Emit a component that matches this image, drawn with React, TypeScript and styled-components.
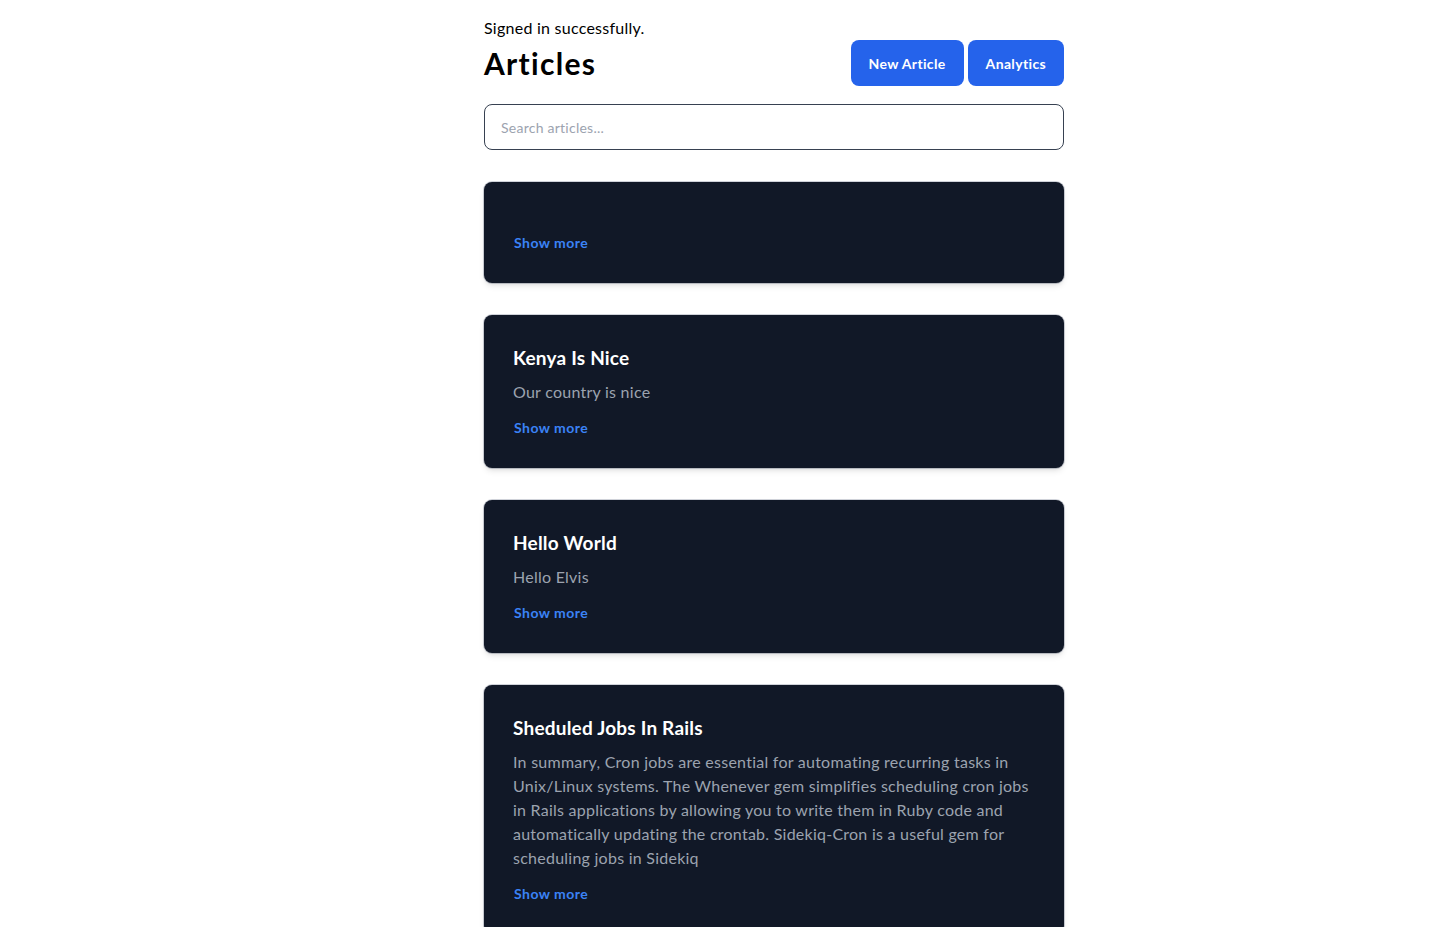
import { createGlobalStyle, styled } from 'styled-components'

const articles = [
  { id: 1, title: '', body: '' },
  { id: 2, title: 'Kenya Is Nice', body: 'Our country is nice' },
  { id: 3, title: 'Hello World', body: 'Hello Elvis' },
  {
    id: 4,
    title: 'Sheduled Jobs In Rails',
    body:
      'In summary, Cron jobs are essential for automating recurring tasks in Unix/Linux systems. The Whenever gem simplifies scheduling cron jobs in Rails applications by allowing you to write them in Ruby code and automatically updating the crontab. Sidekiq-Cron is a useful gem for scheduling jobs in Sidekiq',
  },
]

const App = () => {
  return (
    <>
      <GlobalStyle />
      <Page>
        <Main>
          <Notice>Signed in successfully.</Notice>
          <Header>
            <Title>Articles</Title>
            <BtnArea>
              <Btn>New Article</Btn>
              <Btn>Analytics</Btn>
            </BtnArea>
          </Header>
          <Search placeholder="Search articles..." />
          {articles.map((el) => (
            <Card key={el.id}>
              <CardTitle>{el.title}</CardTitle>
              <CardBody>{el.body}</CardBody>
              <ShowMore href="#">Show more</ShowMore>
            </Card>
          ))}
        </Main>
      </Page>
    </>
  )
}

const GlobalStyle = createGlobalStyle`
  body {
    margin: 0;
    background: #ffffff;
    font-family: Lato, "Noto Sans", sans-serif;
    color: #000000;
  }
  * {
    box-sizing: border-box;
  }
`
const Page = styled.div`
  display: flex;
  padding-left: 484px;
  padding-top: 16px;
`
const Main = styled.main`
  width: 580px;
  display: flex;
  flex-direction: column;
`
const Notice = styled.p`
  margin: 0;
  font-size: 16px;
  line-height: 24px;
  letter-spacing: 0.25px;
`
const Header = styled.div`
  display: flex;
  justify-content: space-between;
  align-items: center;
  margin-bottom: 18px;
`
const Title = styled.h1`
  margin: 0;
  font-size: 30px;
  line-height: 36px;
  font-weight: 700;
  letter-spacing: 1.3px;
`
const BtnArea = styled.div`
  display: flex;
  gap: 4px;
`
const Btn = styled.button`
  height: 46px;
  padding: 0 18px;
  border: none;
  border-radius: 8px;
  background-color: #2563eb;
  color: #ffffff;
  font-family: inherit;
  font-size: 14px;
  font-weight: 700;
  letter-spacing: 0.35px;
`
const Search = styled.input`
  height: 46px;
  width: 100%;
  padding: 0 16px;
  border: 1px solid #374151;
  border-radius: 8px;
  font-family: inherit;
  font-size: 14px;
  letter-spacing: 0.25px;
  margin-bottom: 32px;
  outline: none;
  &::placeholder {
    color: #9ca3af;
  }
`
const Card = styled.div`
  background-color: #111827;
  border-radius: 8px;
  padding: 29px 29px 30px;
  margin-bottom: 32px;
  box-shadow: 0 4px 6px -1px rgba(0, 0, 0, 0.1), 0 2px 4px -2px rgba(0, 0, 0, 0.1),
    0 0 0 1px rgba(120, 130, 150, 0.35);
  display: flex;
  flex-direction: column;
  align-items: flex-start;
`
const CardTitle = styled.h2`
  margin: 0;
  color: #ffffff;
  font-size: 19px;
  line-height: 28px;
  font-weight: 700;
  letter-spacing: 0.2px;
  &:empty {
    height: 0;
  }
`
const CardBody = styled.p`
  margin: 8px 0 0;
  color: #9ca3af;
  font-size: 16px;
  line-height: 24px;
  letter-spacing: 0.25px;
  &:empty {
    height: 0;
  }
`
const ShowMore = styled.a`
  margin-top: 14px;
  margin-left: 1px;
  color: #3b82f6;
  font-size: 14px;
  line-height: 20px;
  font-weight: 700;
  letter-spacing: 0.45px;
  text-decoration: none;
`

export default App
